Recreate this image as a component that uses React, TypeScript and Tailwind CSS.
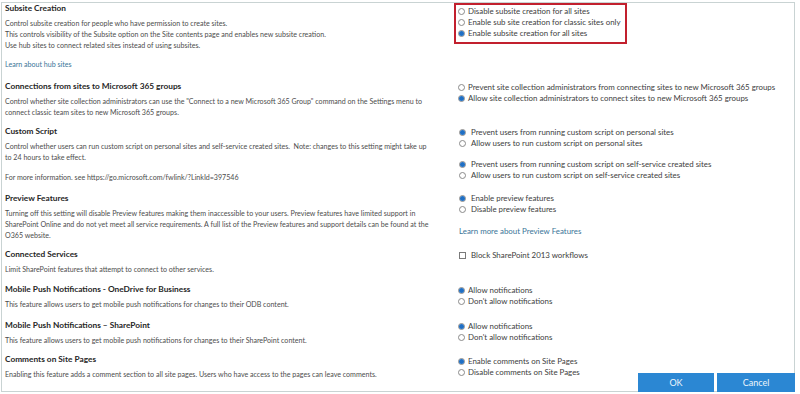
import type { ReactNode } from "react";

type Opt = { label: string; checked?: boolean };

function Radio({ checked }: { checked?: boolean }) {
  return (
    <span className="flex h-[7px] w-[7px] shrink-0 items-center justify-center rounded-full border border-[#8a8a8a] bg-white">
      {checked && <span className="h-[5px] w-[5px] rounded-full bg-[#1f6fc4]" />}
    </span>
  );
}

function RadioGroup({ options, indent = false }: { options: Opt[]; indent?: boolean }) {
  return (
    <div className="flex flex-col">
      {options.map((o) => (
        <div key={o.label} className="flex h-[11px] items-center gap-[3px]">
          <Radio checked={o.checked} />
          <span className={indent ? "pl-[2px]" : ""}>{o.label}</span>
        </div>
      ))}
    </div>
  );
}

function Row({
  title,
  height,
  left,
  right,
}: {
  title: string;
  height: string;
  left: ReactNode;
  right: ReactNode;
}) {
  return (
    <div className={`grid grid-cols-[458px_1fr] ${height}`}>
      <div className="pl-[5px]">
        <div className="h-[11px] whitespace-nowrap text-[8.3px] font-bold leading-[11px] text-[#262626]">{title}</div>
        <div className="mt-[4px] whitespace-nowrap text-[7.1px] leading-[11px] text-[#4d4d4d]">{left}</div>
      </div>
      <div className="whitespace-nowrap text-[7.9px] leading-[11px] text-[#3d3d3d]">{right}</div>
    </div>
  );
}

export default function App() {
  return (
    <div
      className="relative h-[394px] w-[800px] overflow-hidden bg-white"
      style={{ fontFamily: "Lato, 'Open Sans', Arial, sans-serif" }}
    >
      <div className="absolute left-[1px] right-[5px] top-[2px] bottom-[2px] border border-[#c9d3d3]" />
      <div className="relative flex flex-col pt-[3px]">
        <Row
          title="Subsite Creation"
          height="h-[78px]"
          left={
            <>
              <div>Control subsite creation for people who have permission to create sites.</div>
              <div>This controls visibility of the Subsite option on the Site contents page and enables new subsite creation.</div>
              <div>Use hub sites to connect related sites instead of using subsites.</div>
              <div className="mt-[8px] text-[#3b7598]">Learn about hub sites</div>
            </>
          }
          right={
            <div className="-ml-[4px] w-[173px] border-2 border-[#c2202e] px-[2px] pt-[1px] pb-[3px]">
              <RadioGroup
                options={[
                  { label: "Disable subsite creation for all sites" },
                  { label: "Enable sub site creation for classic sites only" },
                  { label: "Enable subsite creation for all sites", checked: true },
                ]}
              />
            </div>
          }
        />
        <Row
          title="Connections from sites to Microsoft 365 groups"
          height="h-[45px]"
          left={
            <>
              <div>
                Control whether site collection administrators can use the "Connect to a new Microsoft 365 Group" command on the Settings menu to
              </div>
              <div>connect classic team sites to new Microsoft 365 groups.</div>
            </>
          }
          right={
            <div className="pt-[1px]">
              <RadioGroup
                options={[
                  { label: "Prevent site collection administrators from connecting sites to new Microsoft 365 groups" },
                  { label: "Allow site collection administrators to connect sites to new Microsoft 365 groups", checked: true },
                ]}
              />
            </div>
          }
        />
        <Row
          title="Custom Script"
          height="h-[67px]"
          left={
            <>
              <div>
                Control whether users can run custom script on personal sites and self-service created sites.&nbsp; Note: changes to this setting might take up
              </div>
              <div>to 24 hours to take effect.</div>
              <div className="mt-[9px]">For more information. see https://go.microsoft.com/fwlink/?LinkId=397546</div>
            </>
          }
          right={
            <div className="flex flex-col gap-[10px] pl-[1px] pt-[1px]">
              <RadioGroup
                indent
                options={[
                  { label: "Prevent users from running custom script on personal sites", checked: true },
                  { label: "Allow users to run custom script on personal sites" },
                ]}
              />
              <RadioGroup
                indent
                options={[
                  { label: "Prevent users from running custom script on self-service created sites", checked: true },
                  { label: "Allow users to run custom script on self-service created sites" },
                ]}
              />
            </div>
          }
        />
        <Row
          title="Preview Features"
          height="h-[56px]"
          left={
            <>
              <div>
                Turning off this setting will disable Preview features making them inaccessible to your users. Preview features have limited support in
              </div>
              <div>
                SharePoint Online and do not yet meet all service requirements. A full list of the Preview features and support details can be found at the
              </div>
              <div>O365 website.</div>
            </>
          }
          right={
            <div className="pl-[1px]">
              <RadioGroup
                indent
                options={[
                  { label: "Enable preview features", checked: true },
                  { label: "Disable preview features" },
                ]}
              />
              <div className="mt-[11px] text-[#3b7598]">Learn more about Preview Features</div>
            </div>
          }
        />
        <Row
          title="Connected Services"
          height="h-[35px]"
          left={<div>Limit SharePoint features that attempt to connect to other services.</div>}
          right={
            <div className="flex h-[11px] items-center gap-[5px] pl-[1px] pt-[1px]">
              <span className="h-[7px] w-[7px] shrink-0 border border-[#7a7a7a] bg-white" />
              <span>Block SharePoint 2013 workflows</span>
            </div>
          }
        />
        <Row
          title="Mobile Push Notifications - OneDrive for Business"
          height="h-[36px]"
          left={<div>This feature allows users to get mobile push notifications for changes to their ODB content.</div>}
          right={
            <div className="pt-[1px]">
              <RadioGroup options={[{ label: "Allow notifications", checked: true }, { label: "Don't allow notifications" }]} />
            </div>
          }
        />
        <Row
          title="Mobile Push Notifications – SharePoint"
          height="h-[34px]"
          left={<div>This feature allows users to get mobile push notifications for changes to their SharePoint content.</div>}
          right={
            <div className="pt-[1px]">
              <RadioGroup options={[{ label: "Allow notifications", checked: true }, { label: "Don't allow notifications" }]} />
            </div>
          }
        />
        <Row
          title="Comments on Site Pages"
          height="h-[36px]"
          left={
            <div>
              Enabling this feature adds a comment section to all site pages. Users who have access to the pages can leave comments.
            </div>
          }
          right={
            <div className="pt-[2px]">
              <RadioGroup
                options={[
                  { label: "Enable comments on Site Pages", checked: true },
                  { label: "Disable comments on Site Pages" },
                ]}
              />
            </div>
          }
        />
      </div>
      <div className="absolute bottom-[2px] right-[5px] flex gap-[3px]">
        <button className="h-[19px] w-[76px] bg-[#2b87d3] text-[9px] text-[#eef5fb]">OK</button>
        <button className="h-[19px] w-[78px] bg-[#2b87d3] text-[9px] text-[#eef5fb]">Cancel</button>
      </div>
    </div>
  );
}
